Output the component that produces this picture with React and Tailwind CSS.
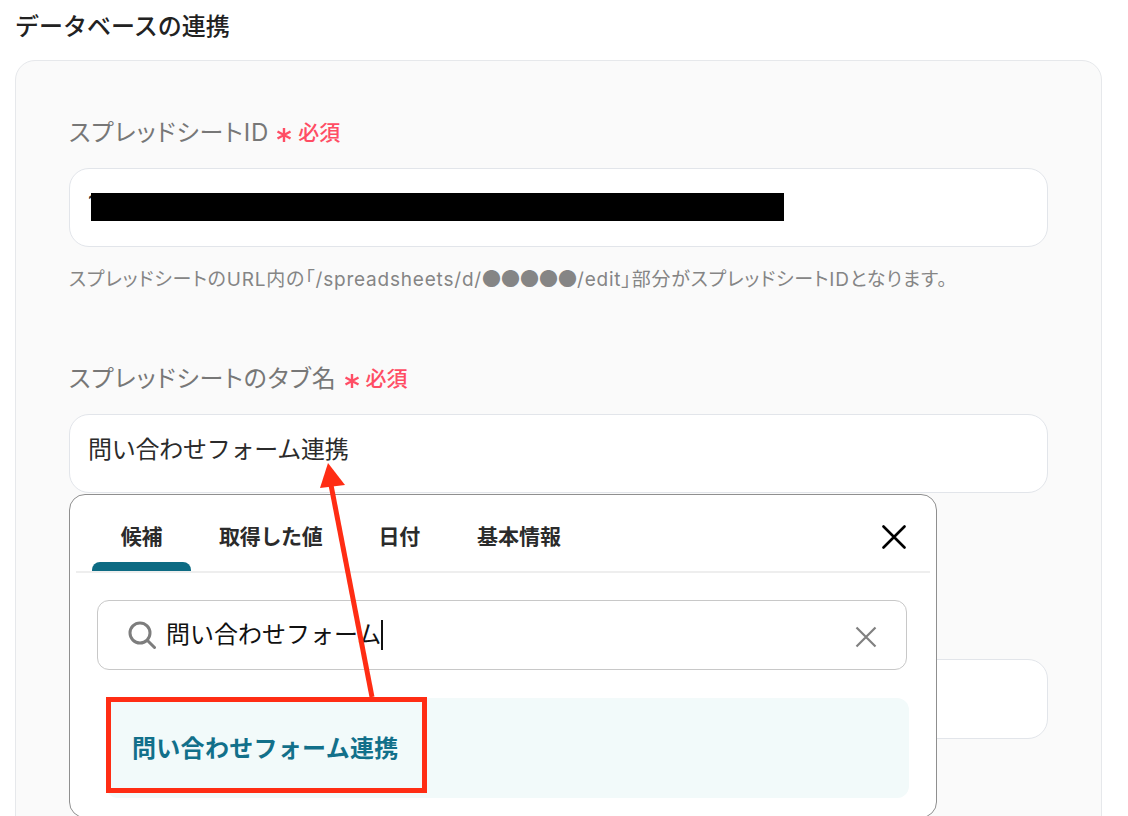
function Asterisk() {
  return (
    <svg width="16" height="16" viewBox="0 0 16 16" className="ml-[7px] mt-[4px] shrink-0" fill="none" stroke="#ff4d64" strokeWidth="2.4">
      <path d="M8 1v14M1.5 4.5l13 7M14.5 4.5l-13 7" />
    </svg>
  );
}

function Label({ children }) {
  return (
    <div className="flex items-center h-[32px] text-[24px] leading-[32px] text-[#777777] [font-feature-settings:'palt'] tracking-[0.95px]">
      <span>{children}</span>
      <Asterisk />
      <span className="ml-[6px] text-[21px] tracking-normal font-medium text-[#ff4d64]">必須</span>
    </div>
  );
}

function Field({ children, tall }) {
  return (
    <div className={tall
      ? "relative mt-[19px] h-[80px] pt-[17px] pl-[18px] rounded-[20px] border border-[#e2e5ea] bg-white text-[24px] leading-[36px] tracking-[-0.25px] text-[#2b2b2b]"
      : "relative mt-[19px] h-[79px] pt-[17px] pl-[18px] rounded-[20px] border border-[#e2e5ea] bg-white text-[24px] leading-[36px] tracking-[-0.25px] text-[#2b2b2b]"}>
      {children}
    </div>
  );
}

export default function App() {
  return (
    <div
      className="relative h-[816px] w-[1128px] overflow-hidden bg-white"
      style={{ fontFamily: 'Inter, "Noto Sans CJK JP", sans-serif' }}
    >
      <div className="pl-[15px] pt-[9px] h-[60px] text-[24px] leading-[36px] font-medium text-[#222222]">データベースの連携</div>

      <div className="ml-[15px] w-[1087px] h-[800px] rounded-[20px] border border-[#e6e8eb] bg-[#fafafa] px-[53px] pt-[56px]">
        <Label>スプレッドシートID</Label>
        <Field>
          <span>1</span>
          <div className="absolute left-[21px] top-[24px] h-[28px] w-[693px] bg-black" />
        </Field>
        <p className="mt-[18px] h-[26px] text-[19px] leading-[26px] text-[#858585] whitespace-nowrap [font-feature-settings:'palt'] tracking-[0.8px]">
          スプレッドシートのURL内の「/spreadsheets/d/
          <span className="tracking-normal" style={{ fontFamily: '"Noto Sans CJK JP", sans-serif' }}>●●●●●</span>
          /edit」部分がスプレッドシートIDとなります。
        </p>

        <div className="mt-[72px]">
          <Label>スプレッドシートのタブ名</Label>
        </div>
        <Field>問い合わせフォーム連携</Field>

        <div className="mt-[166px]">
          <Field tall />
        </div>
      </div>

      {/* suggestion popup */}
      <div className="absolute left-[69px] top-[494px] h-[324px] w-[868px] rounded-[16px] border-[1.5px] border-[#8f8f8f] bg-white px-[6px]">
        <div className="relative h-[78px] pt-[8px] border-b-2 border-[#eeeeee] flex items-center text-[21px] tracking-[-0.3px] font-semibold text-[#2b2b2b]">
          <div className="relative w-[99px] ml-[16px] text-center">候補</div>
          <div className="ml-[28px]">取得した値</div>
          <div className="ml-[56px]">日付</div>
          <div className="ml-[57px] tracking-normal">基本情報</div>
          <div className="absolute left-[16px] bottom-0 h-[9px] w-[99px] rounded-t-[8px] bg-[#0d6b83]" />
          <svg width="24" height="24" viewBox="0 0 24 24" className="absolute right-[24px] top-[30px]" fill="none" stroke="#000000" strokeWidth="2.6" strokeLinecap="round">
            <path d="M1.5 1.5l21 21M22.5 1.5l-21 21" />
          </svg>
        </div>

        <div className="relative ml-[21px] mt-[27px] flex h-[70px] w-[810px] items-center rounded-[12px] border border-[#c8c8c8] pl-[30px] text-[24px] text-[#111111]">
          <svg width="28" height="28" viewBox="0 0 28 28" fill="none" stroke="#7d7d7d" strokeWidth="3" strokeLinecap="round" className="shrink-0">
            <circle cx="12" cy="12" r="10" />
            <path d="M19.5 19.5l7 7" />
          </svg>
          <span className="ml-[10px] border-r-2 border-[#111111] leading-[30px]">問い合わせフォーム</span>
          <svg width="22" height="22" viewBox="0 0 22 22" className="absolute right-[29px] top-[25px]" fill="none" stroke="#808080" strokeWidth="2.2">
            <path d="M1.5 1.5l19 19M20.5 1.5l-19 19" />
          </svg>
        </div>

        <div className="ml-[30px] mt-[28px] flex h-[100px] w-[803px] items-center rounded-[12px] bg-[#f2fafa] pl-[26px] pt-[2px] text-[24px] font-semibold tracking-[0.3px] text-[#12708a]">
          問い合わせフォーム連携
        </div>
      </div>

      {/* annotation overlays */}
      <div className="absolute left-[106px] top-[697px] h-[96px] w-[321px] border-[5px] border-[#ff2d14]" />
      <svg width="70" height="250" viewBox="0 0 70 250" className="absolute left-[310px] top-[455px]" fill="none">
        <path d="M62 242L21 30" stroke="#ff2d14" strokeWidth="5" />
        <path d="M18 8L10 33L35 30Z" fill="#ff2d14" />
      </svg>
    </div>
  );
}
